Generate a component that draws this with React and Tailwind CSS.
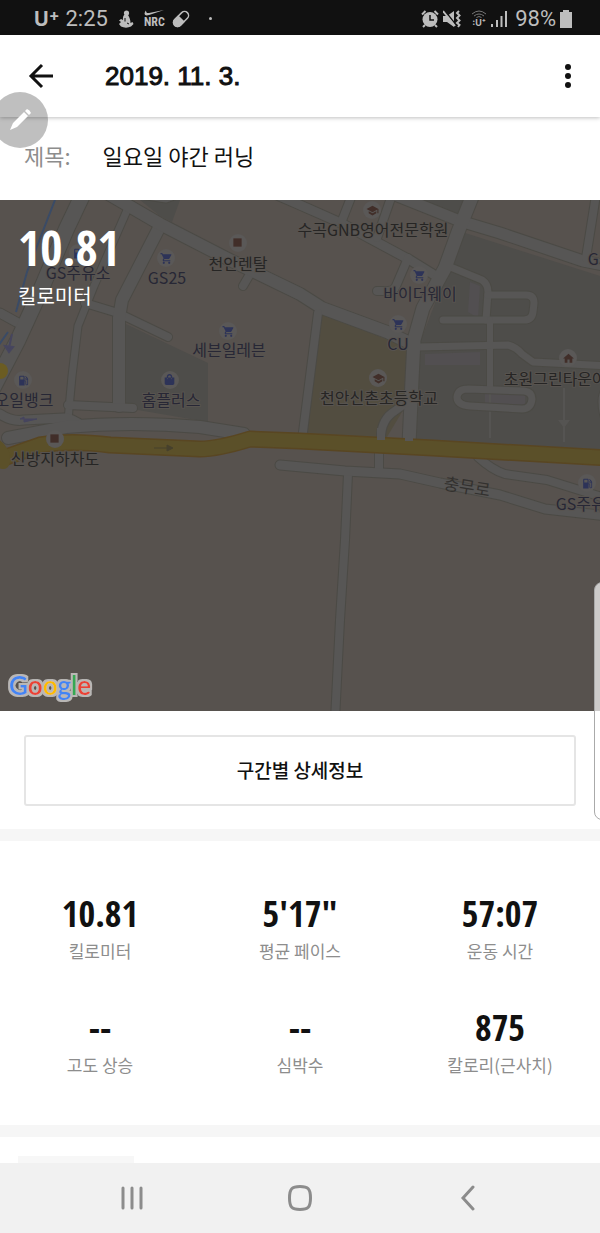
import React, { useState } from "react";
import {
  MdHome,
  MdLocalGasStation,
  MdSchool,
  MdShoppingCart,
  MdSquare,
} from "react-icons/md";
import { FaShoppingBag } from "react-icons/fa";

const stats = [
  { value: "10.81", label: "킬로미터" },
  { value: "5'17\"", label: "평균 페이스" },
  { value: "57:07", label: "운동 시간" },
  { value: "--", label: "고도 상승" },
  { value: "--", label: "심박수" },
  { value: "875", label: "칼로리(근사치)" },
];

// d: centre line of the road, w: width without the casing
const roads = [
  { d: "M0 113 L20 124", w: 9 },
  { d: "M84 -8 L66 30 L40 92 L18 140 L-8 190", w: 15 },
  { d: "M128 8 L94 86 L78 126 L72 176 L68 220", w: 7 },
  { d: "M85 103 L118 113 L168 137", w: 8 },
  { d: "M160 26 L122 100 L119 118 L119 206", w: 12 },
  { d: "M68 205 L133 208", w: 8 },
  { d: "M250 74 L243 86", w: 8 },
  { d: "M134 -6 L166 -1 L195 -12", w: 7 },
  { d: "M105 -8 L160 24 L230 60 L300 94 L322 108 L387 132 L412 144", w: 12 },
  { d: "M270 -8 L300 5 L343 24 L410 60 L436 76", w: 9 },
  { d: "M352 -5 L341 23", w: 8 },
  { d: "M392 -5 L377 38", w: 8 },
  { d: "M408 58 L396 86 Q394 91 388 91 L377 91", w: 8 },
  { d: "M385 -9 L460 21 L500 33 L583 61 L608 66", w: 11 },
  { d: "M596 -5 L586 58", w: 8 },
  { d: "M448 66 L482 80 Q488 84 488 92 L486 120", w: 7 },
  { d: "M488 95 L526 95 Q534 95 534 103 L533 112 Q532 120 524 120 L443 120", w: 7 },
  { d: "M490 120 L490 188", w: 6 },
  { d: "M418 147 L508 145 Q516 147 522 154 L533 162 L608 166", w: 7 },
  { d: "M318 113 L302 240", w: 8 },
  { d: "M474 -8 L458 32 L445 68 L423 108 L414 140 L412 180 L409 244", w: 13 },
  { d: "M468 189 L524 191 Q532 192 532 199 Q531 209 522 209 L470 206 Q457 205 457 197 Q458 189 468 189", w: 7 },
  { d: "M610 186 Q598 192 604 216", w: 7 },
  { d: "M381 242 Q380 222 392 213 L406 203", w: 8 },
  { d: "M0 214 Q12 222 24 220 L64 218 Q72 218 82 226", w: 9 },
  { d: "M8 238 L66 227 Q130 221 200 227 L244 234", w: 12 },
  { d: "M379 252 L379 272", w: 8 },
  { d: "M348 274 L345 340 L340 420 L335 520", w: 8 },
  { d: "M280 265 L345 271 L400 274 L440 283 L500 295 L545 309 L608 316", w: 9 },
  { d: "M478 257 Q492 270 505 274 L547 280 L608 299", w: 8 },
];

const highway =
  "M-8 262 L40 245 Q70 240 110 245 L200 249 Q218 249 250 239 L300 241 L433 248 L608 258";

const places = [
  { name: "GS주유소", x: 78, y: 79, Icon: MdLocalGasStation, ix: 78, iy: 53, tone: "navy" },
  { name: "GS25", x: 167, y: 84, Icon: MdShoppingCart, ix: 166, iy: 58, tone: "navy" },
  { name: "천안렌탈", x: 238, y: 70, Icon: MdSquare, ix: 238, iy: 43, tone: "brown" },
  { name: "수곡GNB영어전문학원", x: 373, y: 36, Icon: MdSchool, ix: 372, iy: 10, tone: "brown" },
  { name: "바이더웨이", x: 420, y: 100, Icon: MdShoppingCart, ix: 419, iy: 75, tone: "navy" },
  { name: "CU", x: 398, y: 150, Icon: MdShoppingCart, ix: 398, iy: 124, tone: "navy" },
  { name: "세븐일레븐", x: 229, y: 156, Icon: MdShoppingCart, ix: 228, iy: 131, tone: "navy" },
  { name: "오일뱅크", x: 24, y: 206, Icon: MdLocalGasStation, ix: 23, iy: 180, tone: "navy" },
  { name: "홈플러스", x: 171, y: 206, Icon: FaShoppingBag, ix: 170, iy: 180, tone: "navy" },
  { name: "천안신촌초등학교", x: 379, y: 204, Icon: MdSchool, ix: 378, iy: 178, tone: "brown" },
  { name: "초원그린타운아파트", x: 570, y: 185, Icon: MdHome, ix: 568, iy: 158, tone: "brown" },
  { name: "신방지하차도", x: 55, y: 265, Icon: MdSquare, ix: 55, iy: 239, tone: "brown" },
  { name: "GS주유소", x: 588, y: 310, Icon: MdLocalGasStation, ix: 587, iy: 283, tone: "navy" },
  { name: "GS25", x: 607, y: 65, Icon: MdShoppingCart, ix: 609, iy: 38, tone: "navy" },
];

function StatusBar() {
  return (
    <div className="flex h-[35px] items-center justify-between bg-[#111] pt-0.5 pr-7 pl-[34px] font-['Roboto',sans-serif] text-[22px] leading-none text-[#bdbdbd]">
      <div className="flex items-center gap-1.5">
        <span className="flex items-start font-['Inter',sans-serif] text-xl leading-5 font-bold">
          U<span className="text-base leading-3">+</span>
        </span>
        <span>2:25</span>
        <svg viewBox="0 0 16 18" className="ml-1 h-[18px] w-4" fill="currentColor">
          <circle cx="8.500" cy="3" r="2.600" />
          <path d="M6 5C4.500 7 5 9 5 10L3 9 1 10.500 3 12 1 14l2 2.500c3 1.500 7 1.500 10 0L15.500 14l-1-2-2 1c0-3-1-6-2.500-8z" />
          <path d="M7 8v3.500M9 13l2 1" stroke="#111" />
        </svg>
        <span className="ml-1 flex flex-col items-center">
          <svg viewBox="0 0 20 6" className="h-[6px] w-5" fill="currentColor">
            <path d="M2 .5C-1 4 1 6.500 5 5L20 0 5 3C3 3.400 2 2.500 2 .5z" />
          </svg>
          <span className="font-['Roboto_Condensed',sans-serif] text-xs leading-3 font-bold">
            NRC
          </span>
        </span>
        <svg viewBox="0 0 20 20" className="h-5 w-5" fill="none" stroke="currentColor" strokeWidth="1.500">
          <rect x="1" y="6" width="18" height="8" rx="4" transform="rotate(-45 10 10)" />
          <path d="M7.200 7.200 3.600 10.800a4 4 0 0 0 5.600 5.600L12.800 12.800z" fill="currentColor" />
        </svg>
        <span className="ml-3 h-[3px] w-[3px] rounded-full bg-current" />
      </div>
      <div className="flex items-center gap-1">
        <svg viewBox="0 0 18 18" className="h-[18px] w-[18px]">
          <circle cx="9" cy="9.500" r="7.500" fill="currentColor" />
          <path d="M1 4.500 4.500 1M17 4.500 13.500 1M4 15l-2 2M14 15l2 2" stroke="currentColor" strokeWidth="2" />
          <path d="M9 5v5h4" fill="none" stroke="#111" strokeWidth="1.500" />
        </svg>
        <svg viewBox="0 0 18 18" className="h-[18px] w-[18px]" fill="currentColor">
          <path d="M0 6h4l7-5v16l-7-5H0z" />
          <path d="M2 1 13 15" stroke="#111" strokeWidth="1.500" />
          <path d="M0 1 12 16" stroke="currentColor" strokeWidth="2" />
          <path d="m16 1-2 2 2.500 2.500L14 8l2.500 2.500L14 13l2.500 2L15 17" fill="none" stroke="currentColor" strokeWidth="2" />
        </svg>
        <span className="ml-1.5 flex w-4 flex-col items-center">
          <svg viewBox="0 0 16 8" className="h-2 w-4" fill="none" stroke="#777">
            <path d="M1 4q7-6 14 0M3 6q5-4 10 0M5.500 7.500q2.500-2 5 0" />
          </svg>
          <span className="font-['Inter',sans-serif] text-[9px] leading-[9px] font-bold">
            :U⁺
          </span>
        </span>
        <svg viewBox="0 0 16 18" className="h-[18px] w-4" stroke="currentColor" strokeWidth="2">
          <path d="M1 14v3M6 10v7M10.500 6v11M15 1v16" />
        </svg>
        <span className="ml-1">98%</span>
        <svg viewBox="0 0 12 18" className="h-[18px] w-3" fill="currentColor">
          <path d="M3 0h6v2h3v16H0V2h3z" />
        </svg>
      </div>
    </div>
  );
}

function RunMap() {
  return (
    <svg
      viewBox="0 0 600 511"
      preserveAspectRatio="xMidYMid slice"
      className="block w-full bg-[#57524e] font-['Noto_Sans_CJK_KR',sans-serif]"
    >
      <g fill="#4e4d4a">
        <path d="M126 124 L170 145 L208 163 L208 222 L126 208z" />
        <path d="M462 32 L600 76 L600 254 L412 243 L418 148z" />
        <path d="M140 0 L180 0 L172 22 L160 16z" />
        <path d="M420 0 L470 0 L462 18z" />
      </g>
      <path d="M322 114 L404 146 L408 156 L408 202 L384 242 L302 238z" fill="#524d40" />
      <g fill="#524f51">
        <path d="M470 82 L480 86 L478 118 L468 112z" />
        <path d="M425 154 L480 152 L480 165 L425 165z" />
        <path d="M485 192 L525 193 L525 205 L485 204z" />
      </g>
      <path d="M490 190 L490 238M564 188 L564 242" stroke="#555452" strokeWidth="2" />
      <path d="m558 220 12 0-6 8z" fill="#555452" />

      <g fill="none" strokeLinecap="round" strokeLinejoin="round">
        {roads.map((road) => (
          <path key={road.d} d={road.d} stroke="#4b4a45" strokeWidth={road.w + 2} />
        ))}
        {roads.map((road) => (
          <path key={road.d} d={road.d} stroke="#575655" strokeWidth={road.w} />
        ))}
        <path d={highway} stroke="#594622" strokeWidth="17" />
        <path d={highway} stroke="#5b5029" strokeWidth="14" />
        <path d="M-4 246 Q4 252 3 262" stroke="#5b5029" strokeWidth="14" />
      </g>
      {/* side streets that run up to the highway's edge */}
      <path d="M381 228v12M409 226v15M379 256v12" stroke="#575655" strokeWidth="8" />
      <circle cx="0" cy="171" r="8" fill="#6b5c22" />
      <path
        d="M55 0 L27 72 L16 112M8 132 L-2 146"
        fill="none"
        stroke="#3a4b66"
        strokeWidth="2"
      />
      <path d="M12 134 L9 148M5 146l4 6 4-5z" stroke="#46455e" fill="#46455e" strokeWidth="2" />
      <path d="M37 219H20l4-2v5z" stroke="#46455e" fill="#46455e" />
      <path d="M154 248h18m-5-3 6 3-6 3z" stroke="#46402c" fill="#46402c" />

      {places.map(({ name, x, y, Icon, ix, iy, tone }) => (
        <g key={`${name}-${x}`}>
          <circle cx={ix} cy={iy} r="9" fill="#5a5857" />
          <Icon
            x={ix - 6}
            y={iy - 6}
            size={Icon === MdSquare || Icon === FaShoppingBag ? 11 : 13}
            color={tone === "navy" ? "#2d3358" : "#412e29"}
          />
          <text
            x={x}
            y={y}
            textAnchor="middle"
            fontSize="16"
            fill={tone === "navy" ? "#272735" : "#262524"}
            stroke="#57534f"
            strokeWidth="2"
            paintOrder="stroke"
          >
            {name}
          </text>
        </g>
      ))}
      <text
        x="467"
        y="293"
        textAnchor="middle"
        fontSize="17"
        fill="#33312f"
        transform="rotate(9 467 287)"
      >
        충무로
      </text>
    </svg>
  );
}

function GoogleMark() {
  return (
    <svg
      viewBox="0 0 92 34"
      className="absolute bottom-2 left-1 h-[34px] w-[92px] overflow-visible"
    >
      <defs>
        <filter id="halo" x="-10%" y="-10%" width="120%" height="120%">
          <feMorphology in="SourceAlpha" operator="dilate" radius="2" result="spread" />
          <feFlood floodColor="#b9b7b5" />
          <feComposite in2="spread" operator="in" />
          <feMerge>
            <feMergeNode />
            <feMergeNode in="SourceGraphic" />
          </feMerge>
        </filter>
      </defs>
      <text
        x="5"
        y="26"
        fontSize="26"
        filter="url(#halo)"
        className="font-['Lato',sans-serif] font-semibold"
      >
        <tspan fill="#4285f4">G</tspan>
        <tspan fill="#ea4335">o</tspan>
        <tspan fill="#fbbc05">o</tspan>
        <tspan fill="#4285f4">g</tspan>
        <tspan fill="#34a853">l</tspan>
        <tspan fill="#ea4335">e</tspan>
      </text>
    </svg>
  );
}

function NavBar() {
  return (
    <nav className="grid h-[70px] grid-cols-3 items-center justify-items-center bg-[#f1f1f1] px-12 text-[#8c8c8c]">
      <button type="button" aria-label="최근 앱">
        <svg viewBox="0 0 24 26" className="h-[26px] w-6" stroke="currentColor" strokeWidth="3" strokeLinecap="round">
          <path d="M3 3v20M12 3v20M21 3v20" />
        </svg>
      </button>
      <button type="button" aria-label="홈">
        <svg viewBox="0 0 26 28" className="h-7 w-[26px]" fill="none" stroke="currentColor" strokeWidth="3">
          <path d="M13 2.500c8 0 10.500 2 10.500 11.500S21 25.500 13 25.500 2.500 23.500 2.500 14 5 2.500 13 2.500z" />
        </svg>
      </button>
      <button type="button" aria-label="뒤로">
        <svg viewBox="0 0 16 26" className="h-[26px] w-4" fill="none" stroke="currentColor" strokeWidth="3" strokeLinecap="round">
          <path d="M13 2 3 13l10 11" />
        </svg>
      </button>
    </nav>
  );
}

export default function App() {
  const [title, setTitle] = useState("일요일 야간 러닝");

  return (
    <div className="relative flex min-h-screen flex-col overflow-hidden bg-white font-['Noto_Sans_CJK_KR',sans-serif] text-[#111]">
      <StatusBar />

      <header className="flex h-[82px] items-center px-7 shadow-[0_1px_4px_rgba(0,0,0,0.25)]">
        <button type="button" aria-label="뒤로 가기">
          <svg viewBox="0 0 26 26" className="h-[26px] w-[26px]" fill="none" stroke="currentColor" strokeWidth="3">
            <path d="M25 13H4M14 2 3 13l11 11" />
          </svg>
        </button>
        <h1 className="ml-[51px] flex-1 font-['Liberation_Sans',sans-serif] text-[26px] leading-8 [-webkit-text-stroke:1px_#111]">
          2019. 11. 3.
        </h1>
        <button type="button" aria-label="더보기">
          <svg viewBox="0 0 8 26" className="h-[26px] w-2" fill="currentColor">
            <circle cx="4" cy="4" r="3" />
            <circle cx="4" cy="13" r="3" />
            <circle cx="4" cy="22" r="3" />
          </svg>
        </button>
      </header>

      <div className="flex h-[83px] items-center gap-8 px-6 pb-2 text-[22px] leading-8">
        <label htmlFor="title" className="text-[#8d8d8d]">
          제목:
        </label>
        <input
          id="title"
          type="text"
          value={title}
          onChange={(event) => setTitle(event.target.value)}
          className="min-w-0 flex-1 outline-none"
        />
      </div>

      <section className="relative">
        <RunMap />
        <div className="absolute top-4 left-[18px] text-white">
          <p className="font-['Noto_Sans_ExtraCondensed','Open_Sans_Condensed','Roboto_Condensed',sans-serif] text-5xl leading-[64px] font-bold">
            10.81
          </p>
          <p className="text-xl leading-8">킬로미터</p>
        </div>
        <GoogleMark />
      </section>

      <div className="px-6 pt-6 pb-[23px]">
        <button
          type="button"
          className="h-[71px] w-full rounded-[3px] border-2 border-[#e5e5e5] text-[19px] font-medium"
        >
          구간별 상세정보
        </button>
      </div>

      <section className="border-y-[12px] border-[#f6f6f6] py-12">
        <dl className="grid grid-cols-3 gap-y-10 text-center">
          {stats.map((stat) => (
            <div key={stat.label} className="flex flex-col-reverse">
              <dt className="text-[17px] leading-6 text-[#8d8d8d]">
                {stat.label}
              </dt>
              <dd className="font-['Noto_Sans_ExtraCondensed','Open_Sans_Condensed','Roboto_Condensed',sans-serif] text-4xl leading-[50px] font-bold">
                {stat.value}
              </dd>
            </div>
          ))}
        </dl>
      </section>

      <div className="flex flex-1 items-end px-[18px]">
        <div className="h-[7px] w-[116px] bg-[#f7f7f7]" />
      </div>

      <NavBar />

      <button
        type="button"
        aria-label="메모"
        className="absolute top-[92px] -left-2 flex h-14 w-14 items-center justify-center rounded-full bg-black/25 text-white"
      >
        <svg viewBox="0 0 24 24" className="h-6 w-6" fill="currentColor">
          <path d="M2 22l3-7L16 4l4 4L9 19zM17 3l2-2q3 1 4 4l-2 2z" />
        </svg>
      </button>
      <div className="absolute top-[582px] -right-3 h-[238px] w-[18px] rounded-lg border border-[#aaa] bg-white/70" />
    </div>
  );
}
